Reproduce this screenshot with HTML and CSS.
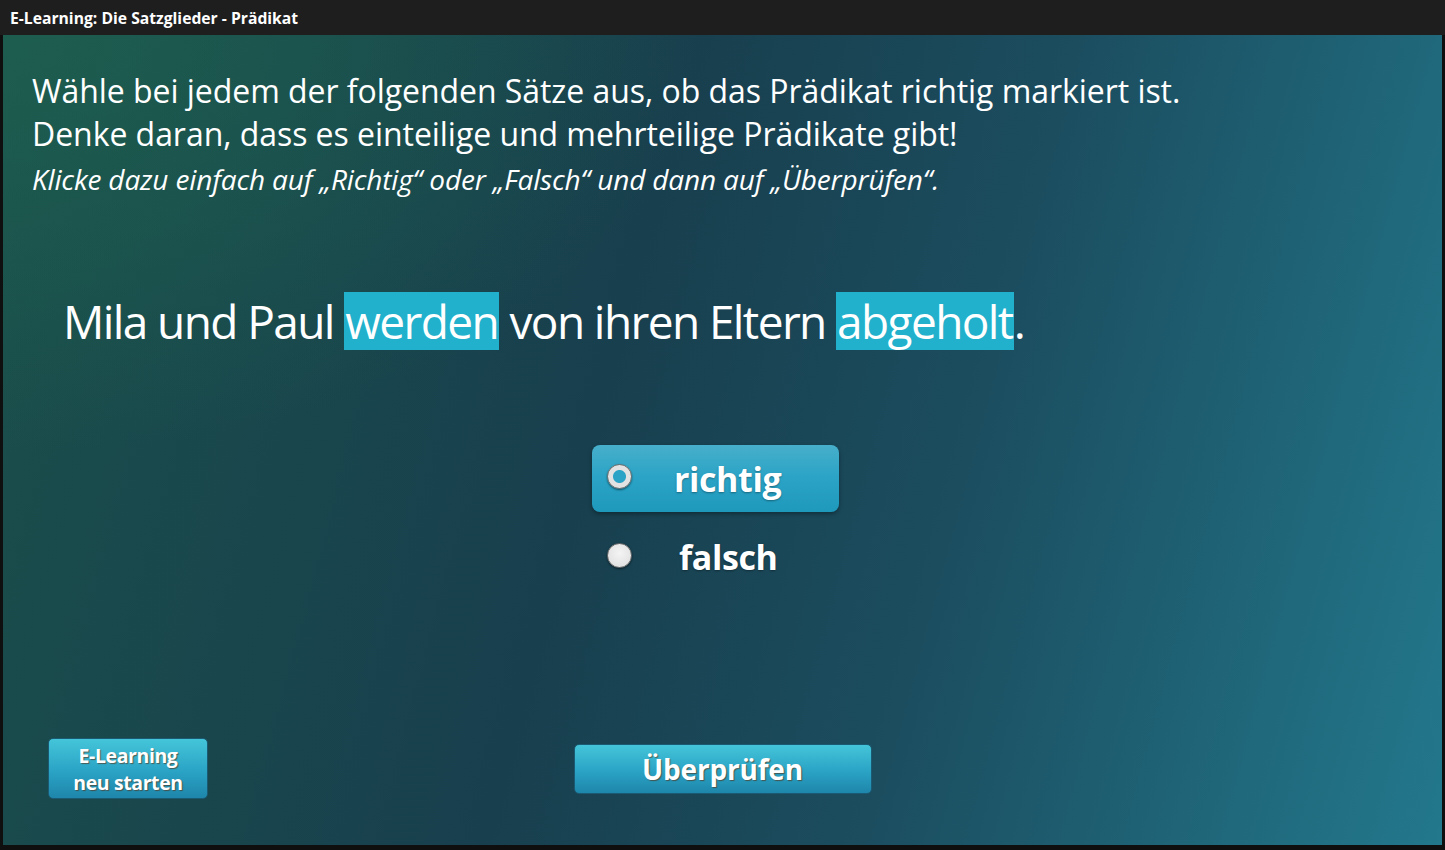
FILE: index.html
```html
<!DOCTYPE html>
<html lang="de">
<head>
<meta charset="utf-8">
<title>E-Learning: Die Satzglieder - Prädikat</title>
<link rel="stylesheet" href="styles.css">
</head>
<body>
<div class="window">
  <div class="titlebar">E-Learning: Die Satzglieder - Prädikat</div>
  <main class="stage">
    <section class="instructions">
      <p class="line">Wähle bei jedem der folgenden Sätze aus, ob das Prädikat richtig markiert ist.</p>
      <p class="line">Denke daran, dass es einteilige und mehrteilige Prädikate gibt!</p>
      <p class="hint">Klicke dazu einfach auf „Richtig“ oder „Falsch“ und dann auf „Überprüfen“.</p>
    </section>
    <p class="sentence">Mila und Paul <span class="mark">werden</span> von ihren Eltern <span class="mark">abgeholt</span>.</p>
    <div class="choices">
      <div class="choice selected"><span class="radio"></span><span class="label">richtig</span></div>
      <div class="choice"><span class="radio"></span><span class="label">falsch</span></div>
    </div>
    <div class="actions">
      <div class="left"><button class="btn restart">E-Learning<br>neu starten</button></div>
      <button class="btn check">Überprüfen</button>
      <div></div>
    </div>
  </main>
</div>
</body>
</html>
```

FILE: styles.css
```css
* { box-sizing: border-box; }
html, body { margin: 0; padding: 0; }
body {
  background: #0f0f0f;
  width: 1445px;
  height: 850px;
  overflow: hidden;
  font-family: "Open Sans", "Noto Sans", sans-serif;
  color: #fff;
}
.window {
  display: flex;
  flex-direction: column;
  height: 845px;
}
.titlebar {
  height: 35px;
  background: #1e1e1e;
  padding: 0 10px;
  font-size: 15.7px;
  font-weight: 700;
  line-height: 36px;
  color: #fff;
}
.stage {
  flex: 1;
  margin: 0 3px;
  display: flex;
  flex-direction: column;
  background:
    radial-gradient(ellipse 700px 420px at 0% 0%, rgba(30, 98, 80, 0.75), rgba(30, 98, 80, 0) 100%),
    linear-gradient(105deg, #1a4f4b 0%, #183f4e 42%, #1b4d5f 65%, #23788c 100%);
}
.instructions {
  padding: 34px 0 0 29px;
}
.line {
  margin: 0;
  font-size: 32px;
  line-height: 43px;
  letter-spacing: -0.05px;
}
.hint {
  margin: 4px 0 0;
  font-size: 28px;
  line-height: 40px;
  font-style: italic;
  letter-spacing: -0.15px;
}
.sentence {
  margin: 93px 0 0 60px;
  font-size: 46px;
  line-height: 58px;
  letter-spacing: -1.6px;
}
.mark {
  background: #21b1cc;
  display: inline-block;
  padding: 0 1px;
}
.choices {
  margin: 95px 0 0 589px;
  display: flex;
  flex-direction: column;
}
.choice {
  width: 247px;
  height: 67px;
  display: flex;
  align-items: center;
  padding-left: 15px;
  border-radius: 8px;
}
.choice.selected {
  background: linear-gradient(#47afcb, #2aa3c6 50%, #1e98bb);
  box-shadow: 0 2px 4px rgba(0, 0, 0, 0.35);
}
.choice + .choice { height: 50px; margin-top: 20px; }
.radio {
  width: 25px;
  height: 25px;
  border-radius: 50%;
  background: radial-gradient(circle at 50% 40%, #f4f4f4, #dcdcdc);
  border: 1px solid #6c6c6c;
  box-shadow: 0 1px 2px rgba(0, 0, 0, 0.5);
  margin-top: -4px;
}
.selected .radio {
  background: radial-gradient(circle, #2aa3c6 0 6px, #e2e2e2 7px);
}
.label {
  margin-left: 42px;
  font-size: 34px;
  font-weight: 700;
  letter-spacing: -0.4px;
  text-shadow: 0 1px 2px rgba(0, 0, 0, 0.35);
}
.choice + .choice .label { margin-left: 47px; }
.actions {
  margin-top: auto;
  margin-bottom: 46px;
  display: grid;
  grid-template-columns: 1fr auto 1fr;
  align-items: end;
}
.left { padding-left: 45px; }
.btn {
  font-family: "Open Sans", "Noto Sans", sans-serif;
  font-weight: 700;
  color: #fff;
  border: 1px solid #1a5a72;
  background: linear-gradient(#44c5d9, #2aa3c5 55%, #1e86aa);
  text-shadow: 1px 1px 1px rgba(90, 40, 10, 0.6);
  cursor: pointer;
}
.restart {
  width: 160px;
  height: 61px;
  border-radius: 5px;
  font-size: 19.5px;
  line-height: 27px;
  letter-spacing: -0.4px;
  padding: 0;
}
.check {
  width: 298px;
  height: 50px;
  border-radius: 5px;
  font-size: 28px;
  letter-spacing: -0.2px;
  padding: 0;
  margin-bottom: 5px;
}
```
